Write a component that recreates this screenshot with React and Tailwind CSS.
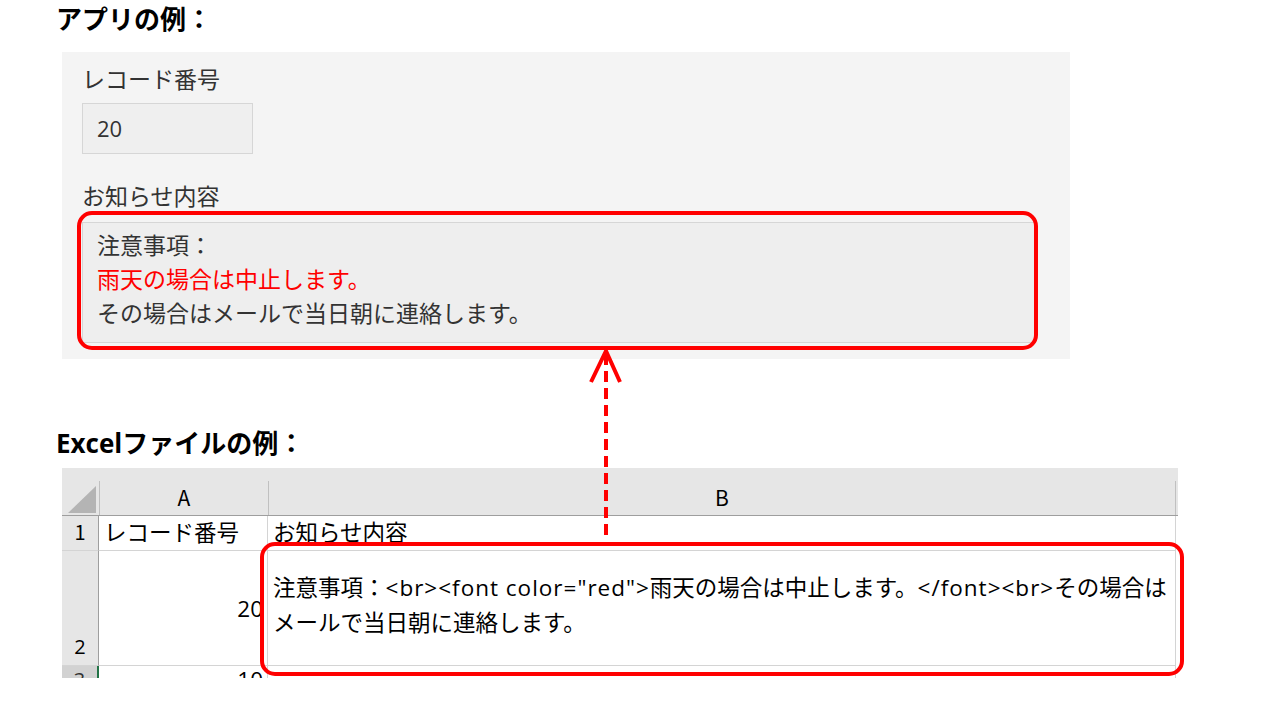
import React from "react";

const jp = { fontFamily: '"Noto Sans CJK JP", "Noto Sans", sans-serif' };
const mixed = { fontFamily: '"Open Sans", "Noto Sans CJK JP", sans-serif' };

// 赤い枠（注釈）
const RedFrame = ({ className }) => (
  <div className={`pointer-events-none absolute rounded-[15px] border-[4px] border-[#ff0000] ${className}`} />
);

// アプリの例
const AppExample = () => (
  <div className="ml-[62px] mt-[17px] w-[1008px] bg-[#f4f4f4] px-[20px] pb-[16px] pt-[10px] text-[#333333]">
    <div className="text-[23px] leading-[32px]">レコード番号</div>
    <div
      className="mt-[9px] flex h-[51px] w-[171px] items-center border border-[#d6d6d6] bg-[#efefef] px-[14px] text-[22px]"
      style={mixed}
    >
      20
    </div>
    <div className="mt-[25px] text-[23px] leading-[32px]">お知らせ内容</div>
    <div className="relative mt-[11px] w-[953px]">
      <div className="border border-[#d6d6d6] bg-[#eeeeee] px-[14px] pb-[13px] pt-[4px] text-[23px] leading-[34px]">
        <div>注意事項：</div>
        <div className="text-[#ff0000]">雨天の場合は中止します。</div>
        <div>その場合はメールで当日朝に連絡します。</div>
      </div>
      <RedFrame className="-left-[5px] -right-[3px] -top-[11px] -bottom-[7px]" />
    </div>
  </div>
);

// Excelの例
const ExcelExample = () => (
  <div className="relative ml-[62px] mt-[8px] w-[1116px]">
    <div className="h-[210px] overflow-hidden text-black">
      {/* 列ヘッダー */}
      <div className="flex h-[48px] border-b border-[#9e9e9e] bg-[#e6e6e6]">
        <div className="w-[37px] pl-[6px] pt-[18px]">
          <svg width="28" height="27" viewBox="0 0 28 27">
            <polygon points="28,0 28,27 0,27" fill="#b4b4b4" />
          </svg>
        </div>
        <div className="mt-[13px] flex w-[169px] items-center justify-center border-l border-[#c0c0c0] text-[21px]">A</div>
        <div className="mt-[13px] flex w-[908px] items-center justify-center border-x border-[#c0c0c0] text-[21px]">B</div>
      </div>
      {/* 1行目 */}
      <div className="flex h-[35px] text-[22.5px] leading-[31px]">
        <div className="w-[37px] border-b border-r border-[#d4d4d4] border-r-[#9e9e9e] bg-[#e6e6e6] text-center text-[20px]">1</div>
        <div className="w-[169px] border-b border-r border-[#d4d4d4] pl-[5px]">レコード番号</div>
        <div className="w-[908px] border-b border-r border-[#d4d4d4] pl-[5px]">お知らせ内容</div>
      </div>
      {/* 2行目 */}
      <div className="flex h-[115px] text-[22.5px] leading-[35px]" style={mixed}>
        <div className="flex w-[37px] items-end justify-center border-b border-r border-[#d4d4d4] border-r-[#9e9e9e] bg-[#e6e6e6] pb-[1px] text-[20px]">2</div>
        <div className="flex w-[169px] items-center justify-end border-b border-r border-[#d4d4d4] pr-[4px]">20</div>
        <div className="flex w-[908px] items-center border-b border-r border-[#d4d4d4] pb-[6px] pl-[5px]">
          <div className="whitespace-nowrap">
            <div>
              注意事項：<span className="tracking-[1px]">&lt;br&gt;&lt;font color="red"&gt;</span>
              雨天の場合は中止します。<span className="tracking-[1px]">&lt;/font&gt;&lt;br&gt;</span>その場合は
            </div>
            <div>メールで当日朝に連絡します。</div>
          </div>
        </div>
      </div>
      {/* 3行目 */}
      <div className="flex h-[35px] text-[22.5px] leading-[28px]" style={mixed}>
        <div className="w-[37px] border-r-2 border-[#217346] bg-[#d2d2d2] text-center text-[20px] text-[#333333]">3</div>
        <div className="w-[169px] border-r border-[#d4d4d4] pr-[4px] text-right">10</div>
        <div className="w-[908px] border-r border-[#d4d4d4]" />
      </div>
    </div>
    <RedFrame className="left-[198px] top-[74px] h-[134px] w-[924px]" />
  </div>
);

// 矢印（注釈）
const Arrow = () => (
  <svg className="pointer-events-none absolute left-[586px] top-[346px]" width="40" height="200" viewBox="0 0 40 200">
    <line x1="20" y1="8" x2="20" y2="195" stroke="#ff0000" strokeWidth="4" strokeDasharray="11 6" />
    <polyline points="5,36 20,5 34,36" fill="none" stroke="#ff0000" strokeWidth="4" strokeLinejoin="miter" />
  </svg>
);

const App = () => {
  return (
    <div className="relative h-[720px] w-[1280px] overflow-hidden bg-white" style={jp}>
      <h2 className="pl-[56px] pt-[1px] text-[26px] font-bold leading-[34px] text-black">アプリの例：</h2>
      <AppExample />
      <h2 className="mt-[67px] pl-[56px] text-[26px] font-bold leading-[34px] text-black" style={mixed}>
        Excelファイルの例：
      </h2>
      <ExcelExample />
      <Arrow />
    </div>
  );
};

export default App;
